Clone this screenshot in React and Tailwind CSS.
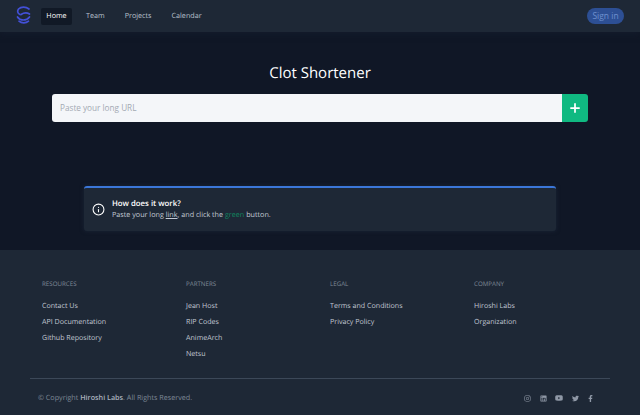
import { Plus, Info } from "lucide-react";
import { FaInstagram, FaLinkedin, FaYoutube, FaTwitter, FaFacebookF } from "react-icons/fa";

const columns = [
  { title: "Resources", links: ["Contact Us", "API Documentation", "Github Repository"] },
  { title: "Partners", links: ["Jean Host", "RIP Codes", "AnimeArch", "Netsu"] },
  { title: "Legal", links: ["Terms and Conditions", "Privacy Policy"] },
  { title: "Company", links: ["Hiroshi Labs", "Organization"] },
];

function Logo() {
  return (
    <svg width="15" height="18" viewBox="0 0 15 18" fill="none" stroke="#4350d8" strokeWidth="1.7" strokeLinecap="round" className="mb-[2px]">
      <path d="M13 3C10 .6 5 .6 2.5 3 1 5 1.5 7.5 4 8.5" />
      <path d="M5 8.5C8 6.5 11 6.5 13.5 8" />
      <path d="M1.5 11C4 15 10.5 15 13.5 11" />
      <path d="M3 15.2C5.5 17.4 10 17.4 12.5 15.2" />
    </svg>
  );
}

export default function App() {
  return (
    <div className="h-[415px] overflow-hidden flex flex-col bg-[#101726] font-['Open_Sans',sans-serif] [text-rendering:geometricPrecision]">
      <header className="h-[32px] shrink-0 flex items-center justify-between pl-[16px] pr-[16px] bg-[#1e2836] shadow-[0_2px_6px_rgba(20,28,44,0.9)]">
        <div className="flex items-center">
          <Logo />
          <nav className="flex items-center ml-[10px] text-[7.2px] text-[#b9c1cd]">
            <a className="h-[17px] w-[31px] flex items-center justify-center rounded-[2px] bg-[#111926] text-white pt-[1px]">Home</a>
            <a className="ml-[14px] pt-[1px]">Team</a>
            <a className="ml-[20px] pt-[1px]">Projects</a>
            <a className="ml-[20px] pt-[1px]">Calendar</a>
          </nav>
        </div>
        <button className="h-[16px] w-[37px] rounded-full bg-[#2d4f94] text-[8.5px] text-[#6d8fcf]">Sign in</button>
      </header>

      <main className="h-[218px] shrink-0 flex flex-col items-center">
        <h1 className="mt-[29px] text-[15px] leading-[24px] font-medium text-white">Clot Shortener</h1>
        <div className="mt-[9px] flex w-[536px] h-[28px] rounded-[3px] overflow-hidden">
          <input
            placeholder="Paste your long URL"
            className="flex-1 bg-[#f4f6f9] px-[8px] pt-[1px] text-[8.2px] text-gray-800 placeholder:text-[#a3a9b3] outline-none"
          />
          <button className="w-[26px] flex items-center justify-center bg-[#10b981] text-white">
            <Plus size={14} strokeWidth={3} />
          </button>
        </div>
        <div className="mt-[64px] w-[472px] h-[45px] flex items-center gap-[7px] pl-[8px] rounded-[3px] border-t-2 border-[#3b76d8] bg-[#1e2836] shadow-[0_0_4px_rgba(30,41,59,0.8)]">
          <Info size={13} strokeWidth={2} className="text-white" />
          <div className="pt-[1px]">
            <p className="text-[7.8px] leading-[11px] font-semibold text-white">How does it work?</p>
            <p className="text-[7.2px] leading-[11px] text-[#c3cad5]">
              Paste your long <span className="underline">link</span>, and click the{" "}
              <span className="text-[#10855f]">green</span> button.
            </p>
          </div>
        </div>
      </main>

      <footer className="flex-1 bg-[#1e2836] px-[30px]">
        <div className="h-[128px] grid grid-cols-4 pl-[12px] pt-[30px] w-[588px]">
          {columns.map((col) => (
            <div key={col.title}>
              <h3 className="text-[6.2px] leading-[8px] uppercase text-[#7f8896]">{col.title}</h3>
              <ul className="mt-[10px] text-[7.1px] text-[#c0c7d2]">
                {col.links.map((link) => (
                  <li key={link} className="h-[16px] flex items-center">{link}</li>
                ))}
              </ul>
            </div>
          ))}
        </div>
        <hr className="border-t border-[#3c4858]" />
        <div className="flex items-center justify-between pl-[8px] pr-[16px] pt-[1px] h-[37px] text-[7.2px] text-[#7f8896]">
          <p>
            © Copyright <span className="font-semibold text-[#aab2be]">Hiroshi Labs</span>. All Rights Reserved.
          </p>
          <div className="flex items-center gap-[8.5px] text-[#8f98a6]">
            <FaInstagram size={7} />
            <FaLinkedin size={7} />
            <FaYoutube size={8} />
            <FaTwitter size={7} />
            <FaFacebookF size={7} />
          </div>
        </div>
      </footer>
    </div>
  );
}
